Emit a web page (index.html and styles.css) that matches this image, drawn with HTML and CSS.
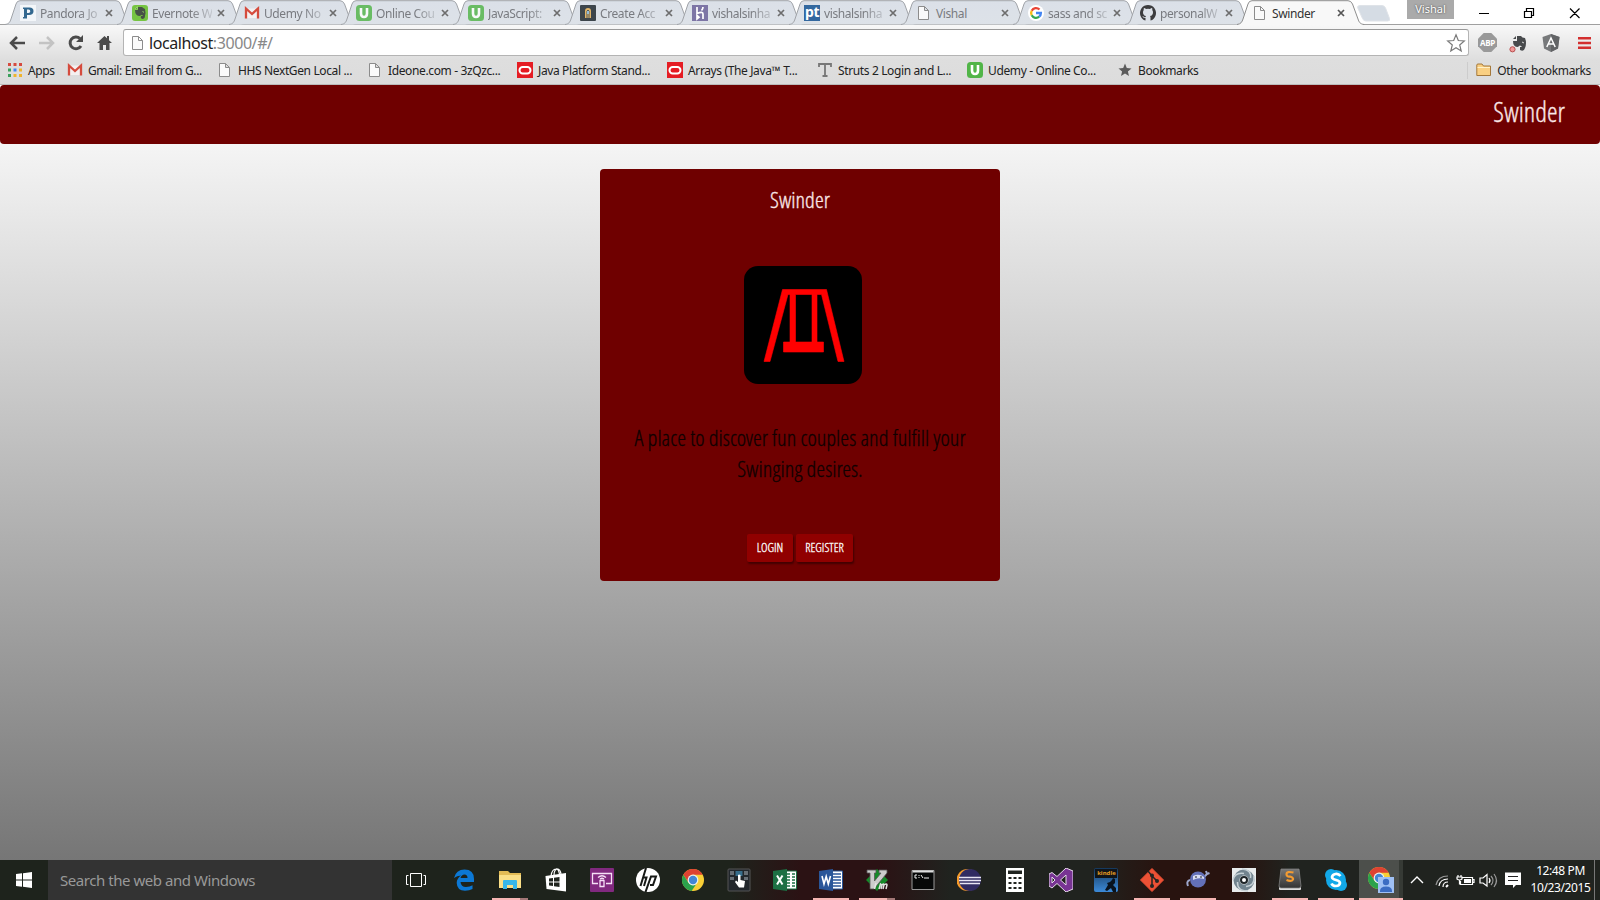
FILE: index.html
```html
<!DOCTYPE html>
<html lang="en">
<head>
<meta charset="utf-8">
<title>Swinder</title>
<link rel="stylesheet" href="styles.css">
</head>
<body>
<svg class="defs" aria-hidden="true">
  <defs>
    <linearGradient id="tabfill" x1="0" y1="0" x2="0" y2="1"><stop offset="0" stop-color="#dbe0e8"/><stop offset="1" stop-color="#dde2e8"/></linearGradient>
    <linearGradient id="blue" x1="0" y1="0" x2="0" y2="1"><stop offset="0" stop-color="#15385c"/><stop offset="1" stop-color="#3c8ad8"/></linearGradient>
    <linearGradient id="key" x1="0" y1="0" x2="0" y2="1"><stop offset="0" stop-color="#777"/><stop offset="1" stop-color="#333"/></linearGradient>
    <symbol id="tab" viewBox="0 0 128 25"><path d="M0 24.5C4 24 5 22 6 19L11 4Q12 .7 15 .7H111Q114 .7 115.500 4L121 19C122 22 123 24 127 24.500" fill="url(#tabfill)" stroke="#a0a3a8"/></symbol>
    <symbol id="tab-on" viewBox="0 0 128 25"><path d="M0 24.5C4 24 5 22 6 19L11 4Q12 .7 15 .7H111Q114 .7 115.500 4L121 19C122 22 123 24 127 24.500V26H0Z" fill="#f8f8f8" stroke="#8d8d8d"/></symbol>
    <symbol id="x" viewBox="0 0 8 8"><path d="M1 1L7 7M7 1L1 7" stroke="currentColor" stroke-width="1.700"/></symbol>
    <symbol id="page" viewBox="0 0 16 16"><path d="M2.500 1.500H8.500L12.500 5.500V14.500H2.500ZM8.500 1.500V5.500H12.500" fill="#fafafa" stroke="#8c8c8c"/></symbol>
    <symbol id="gmail" viewBox="0 0 16 16"><path d="M1 3.500H14V13H1Z" fill="#f4f0f0"/><path d="M2 13.500V3.500L8 9L14 3.500V13.500" fill="none" stroke="#d54b3d" stroke-width="2.300"/></symbol>
    <symbol id="udemy" viewBox="0 0 16 16"><rect width="16" height="16" rx="3.500" fill="#51b548"/><path d="M5 3V8.500Q5 12 8 12T11 8.500V3" fill="none" stroke="#fff" stroke-width="2.600"/></symbol>
    <symbol id="oracle" viewBox="0 0 16 16"><path d="M0 0H16V16H0Z" fill="#e51c23"/><rect x="2.500" y="5" width="11" height="6.500" rx="3.200" fill="none" stroke="#fff" stroke-width="2"/></symbol>
    <symbol id="chrome" viewBox="0 0 24 24"><circle cx="12" cy="12" r="11" fill="#f9cf36"/><path d="M2.300 6.700A11 11 0 0 1 21.700 6.700H12L7.500 14.600Z" fill="#dd4232"/><path d="M2.300 6.700L7.500 14.700 12 17.300 15 16.500 10.600 23A11 11 0 0 1 2.300 6.700" fill="#2ba24c"/><circle cx="12" cy="12" r="5.400" fill="#eef3ee"/><circle cx="12" cy="12" r="4.200" fill="#4386d5"/></symbol>
  </defs>
</svg>
<div class="browser">
  <div class="tabs">
    <div class="tab"><svg class="shape"><use href="#tab"/></svg><svg class="fav" viewBox="0 0 16 16"><path d="M0 0H16V16H0Z" fill="#f3f6f9"/><path d="M3 2.500H9.500Q13.500 2.500 13.500 6.200T9 10H7V13.500H3V12H4V4H3ZM7 4.500V8H8.500Q10.300 8 10.300 6.200T8.500 4.500Z" fill="#33688f" fill-rule="evenodd"/></svg><span class="name">Pandora Jo</span><svg class="close"><use href="#x"/></svg></div>
    <div class="tab"><svg class="shape"><use href="#tab"/></svg><svg class="fav" viewBox="0 0 16 16"><rect width="16" height="16" rx="3" fill="#76c442"/><path d="M6 2H10Q11 3 13 4Q14 8 13 11Q13 14 10 14Q8 13 9 11H11Q10 9 8 11Q3 11 3 5H6Z" fill="#475247"/><path d="M3 4L5.500 1.500V4ZM10.500 6.500L12 7.300" fill="#475247" stroke="#93d267"/></svg><span class="name">Evernote W</span><svg class="close"><use href="#x"/></svg></div>
    <div class="tab"><svg class="shape"><use href="#tab"/></svg><svg class="fav"><use href="#gmail"/></svg><span class="name">Udemy No</span><svg class="close"><use href="#x"/></svg></div>
    <div class="tab"><svg class="shape"><use href="#tab"/></svg><svg class="fav pale"><use href="#udemy"/></svg><span class="name">Online Cou</span><svg class="close"><use href="#x"/></svg></div>
    <div class="tab"><svg class="shape"><use href="#tab"/></svg><svg class="fav pale"><use href="#udemy"/></svg><span class="name">JavaScript:</span><svg class="close"><use href="#x"/></svg></div>
    <div class="tab"><svg class="shape"><use href="#tab"/></svg><svg class="fav" viewBox="0 0 16 16"><rect width="16" height="16" rx="1" fill="#3d454b"/><path d="M5 13V6Q5 3 8 3T11 6V13Z" fill="#e2b568"/><path d="M7 13V6Q8 4 9 6V13" fill="none" stroke="#4f5a60"/><path d="M8 6V9" stroke="#93bedc" stroke-width="2"/></svg><span class="name">Create Acc</span><svg class="close"><use href="#x"/></svg></div>
    <div class="tab"><svg class="shape"><use href="#tab"/></svg><svg class="fav" viewBox="0 0 16 16"><path d="M0 0H16V16H0Z" fill="#7d75a5"/><path d="M5 2V8.500Q11 6 11 9V14M11 2Q11 4 9.500 5.500M5 10.500V14L7 12.300Z" fill="none" stroke="#fff" stroke-width="1.700"/></svg><span class="name">vishalsinha</span><svg class="close"><use href="#x"/></svg></div>
    <div class="tab"><svg class="shape"><use href="#tab"/></svg><b class="fav pt">pt</b><span class="name">vishalsinha</span><svg class="close"><use href="#x"/></svg></div>
    <div class="tab"><svg class="shape"><use href="#tab"/></svg><svg class="fav"><use href="#page"/></svg><span class="name full">Vishal</span><svg class="close"><use href="#x"/></svg></div>
    <div class="tab"><svg class="shape"><use href="#tab"/></svg><svg class="fav" viewBox="0 0 16 16"><circle cx="8" cy="8" r="8" fill="#fff"/><g fill="none" stroke-width="2.300"><path d="M3.700 5.700A4.900 4.900 0 0 1 11.500 4.500" stroke="#e94435"/><path d="M3.700 10.300A4.900 4.900 0 0 1 3.700 5.700" stroke="#f9bb16"/><path d="M11.200 11.700A4.900 4.900 0 0 1 3.700 10.300" stroke="#36a853"/><path d="M8 8H12.900Q12.900 10.300 11.200 11.700" stroke="#4385f2"/></g></svg><span class="name">sass and sc</span><svg class="close"><use href="#x"/></svg></div>
    <div class="tab"><svg class="shape"><use href="#tab"/></svg><svg class="fav" viewBox="0 0 16 16"><path d="M5.500 15.600V13Q3.500 13.500 2.800 11.500L2 11Q3 10.700 4 12Q4.700 12.500 5.600 12.100Q5.700 11.400 6 11Q3 10.500 3 7.200Q3 5.800 3.800 5Q3.500 4 4 3Q5 3 6 3.900Q8 3.400 10 3.900Q11 3 12 3Q12.500 4 12.200 5Q13 5.800 13 7.200Q13 10.500 10 11Q10.500 11.500 10.500 12.500V15.600A8 8 0 1 0 5.500 15.600" fill="#3c3c3e"/></svg><span class="name">personalW</span><svg class="close"><use href="#x"/></svg></div>
    <div class="tab on"><svg class="shape"><use href="#tab-on"/></svg><svg class="fav"><use href="#page"/></svg><span class="name full">Swinder</span><svg class="close"><use href="#x"/></svg></div>
    <svg class="newtab" viewBox="0 0 34 17"><path d="M3 .5H25Q27.500 .5 28.500 3L32.500 13.500Q33.500 16 30.500 16H9Q6.500 16 5.500 13.500L.8 3Q0 .5 3 .5Z" fill="#d5dce4" stroke="#dfe3e8"/></svg>
    <div class="user">Vishal</div>
    <svg class="winctl" viewBox="0 0 120 26" fill="none" stroke="#000"><path d="M9 13.500H19M54.500 11.500H61.500V17.500H54.500ZM56.500 11V8.500H63.500V15.500H62M100 8.500L109.500 18M109.500 8.500L100 18" stroke-width="1.200"/></svg>
  </div>
  <div class="toolbar">
    <svg class="nav" viewBox="0 0 112 26"><g fill="none" stroke-width="2.500"><path d="M25 13H12M17 7L11 13L17 19" stroke="#4b4b4b"/><path d="M39 13H52M47 7L53 13L47 19" stroke="#c3c3c3"/><path d="M80 8.500A5.900 5.900 0 1 0 81 16" stroke="#4b4b4b" stroke-width="3"/></g><path d="M83 5V12H76ZM97 13L104.500 6L107 8.300V6H109V10.200L112 13H109.500V20H106V15H103V20H99.500V13Z" fill="#4b4b4b"/></svg>
    <div class="omnibox"><svg class="fav"><use href="#page"/></svg><span class="url">localhost<i>:3000/#/</i></span><svg class="star" viewBox="0 0 20 20"><path d="M10 1.800L12.300 7.500L18.300 8L13.700 12L15.200 18L10 14.700L4.800 18L6.300 12L1.700 8L7.700 7.500Z" fill="#fff" stroke="#7a7a7a" stroke-width="1.200"/></svg></div>
    <div class="exts">
      <b class="abp">ABP</b>
      <svg class="ext" viewBox="0 0 20 20"><path d="M8 3H12Q13 5 16 5Q18 10 16 15Q15 19 11 17V14H13Q11 11 9 14Q4 14 4 8H8Z" fill="#484a4c"/><path d="M4 6L7 3V6Z" fill="#484a4c"/><path d="M13 9L15 10" stroke="#ddd"/><circle cx="3.500" cy="16.300" r="2.600" fill="#f19898" stroke="#b75050"/></svg>
      <svg class="ext" viewBox="0 0 20 20"><path d="M10 1L18.500 4L17 15.500L10 19L3 15.500L1.500 4Z" fill="#77797b"/><path d="M10 1L18.500 4L17 15.500L10 19Z" fill="#626466"/><path d="M5.800 14L10 5L14.200 14M7.500 11H12.500" fill="none" stroke="#fff" stroke-width="1.500"/></svg>
      <svg class="menu" viewBox="0 0 14 14"><path d="M0 2H14M0 7H14M0 12H14" stroke="#d32f2f" stroke-width="2.700"/></svg>
    </div>
  </div>
  <div class="bookmarks">
    <div class="bm apps"><svg viewBox="0 0 16 16"><path d="M1 1h3v3h-3zM6.500 1h3v3h-3zM12 1h3v3h-3z" fill="#d64a3f"/><path d="M1 6.500h3v3h-3zM1 12h3v3h-3z" fill="#3ba05c"/><path d="M6.500 6.500h3v3h-3z" fill="#4385f2"/><path d="M12 6.500h3v3h-3zM6.500 12h3v3h-3zM12 12h3v3h-3z" fill="#efb42e"/></svg><span>Apps</span></div>
    <div class="bm"><svg><use href="#gmail"/></svg><span>Gmail: Email from G...</span></div>
    <div class="bm"><svg><use href="#page"/></svg><span>HHS NextGen Local ...</span></div>
    <div class="bm"><svg><use href="#page"/></svg><span>Ideone.com - 3zQzc...</span></div>
    <div class="bm"><svg><use href="#oracle"/></svg><span>Java Platform Stand...</span></div>
    <div class="bm"><svg><use href="#oracle"/></svg><span>Arrays (The Java™ T...</span></div>
    <div class="bm"><svg viewBox="0 0 16 16"><path d="M2 5V2H14V5M8 2V14M5.500 14H10.500" fill="none" stroke="#777" stroke-width="1.800"/></svg><span>Struts 2 Login and L...</span></div>
    <div class="bm"><svg><use href="#udemy"/></svg><span>Udemy - Online Co...</span></div>
    <div class="bm"><svg viewBox="0 0 16 16"><path d="M8 1.500L9.800 6L14.500 6.400L10.900 9.400L12 14L8 11.500L4 14L5.100 9.400L1.500 6.400L6.200 6Z" fill="#5b5b5b"/></svg><span>Bookmarks</span></div>
    <div class="bm other"><svg viewBox="0 0 16 16"><path d="M.8 3Q.8 2 2 2H6L7.500 4H14.500V13.500H.8Z" fill="#f9cf82" stroke="#a4783b"/><path d="M1.500 5.500H14" stroke="#fff1c8"/></svg><span>Other bookmarks</span></div>
  </div>
</div>
<main class="site">
  <header class="navbar"><span class="cond brand">Swinder</span></header>
  <section class="card">
    <h1 class="cond">Swinder</h1>
    <svg class="logo" viewBox="0 0 118 118"><rect width="118" height="118" rx="14" fill="#000"/><path d="M38.500 23.500H82.500L100 95.500H94L77.500 28.500H73V76H79.500V86H39.500V76H46V28.500H44L26 95.500H20ZM51.500 28.500V76H68V28.500Z" fill="#f00" stroke="#f00" stroke-width=".6" fill-rule="evenodd"/></svg>
    <p><span class="cond">A place to discover fun couples and fulfill your</span><span class="cond">Swinging desires.</span></p>
    <div class="actions"><button class="login"><span class="cond">LOGIN</span></button><button class="register"><span class="cond">REGISTER</span></button></div>
  </section>
</main>
<footer class="taskbar">
  <div class="start"><svg viewBox="0 0 16 16" fill="#fff"><path d="M0 2L6 1.300V7.500H0ZM7 1.200L16 0V7.500H7ZM0 8.500H6V14.700L0 14ZM7 8.500H16V16L7 14.800Z"/></svg></div>
  <div class="search">Search the web and Windows</div>
  <div class="view"><svg viewBox="0 0 22 16" fill="none" stroke="#fff"><path d="M5.500 1.500H16.500V14.500H5.500ZM3.500 3.500H1.500V12.500H3.500M18.500 3.500H20.500V12.500H18.500"/></svg></div>
  <div class="apps-row">
    <div class="app"><svg viewBox="0 0 24 24"><path d="M2 10Q4 1.500 12.500 1.500Q22 1.500 22 11V14H8.500Q9 19 14 19Q18 19 20.500 17.300V21Q17.500 22.700 13 22.700Q5 22.700 4.700 15Q4.700 10.500 9 7.500Q5 7.500 2 10ZM8.500 10H15.500Q15.500 6.500 12.500 6.500Q9.500 6.500 8.500 10Z" fill="#0c78d5" fill-rule="evenodd"/></svg></div>
    <div class="app run two"><svg viewBox="0 0 24 24"><path d="M1 3H10L12 5H23V20H1Z" fill="#e3bb55"/><path d="M1 7H23V20H1Z" fill="#fbdf87"/><path d="M5 21V13Q5 12 6 12H18Q19 12 19 13V21H15V17H9V21Z" fill="#38b7e9"/></svg></div>
    <div class="app"><svg viewBox="0 0 24 24"><path d="M1.500 8L22 5V23.500L2.500 21Z" fill="#fff"/><path d="M7 8Q8 1 12 1Q14 0 15.500 6M10 7Q10 1 14 1Q16.500 2 17 6" fill="none" stroke="#fff" stroke-width="1.200"/><path d="M5 10.500L9 10V13.500H5ZM10 9.800L15.500 9V13.500H10ZM5 14.500H9V18L5 17.500ZM10 14.500H15.500V19L10 18.200Z" fill="#20251f"/></svg></div>
    <div class="app"><svg viewBox="0 0 24 24"><rect width="24" height="24" rx="1" fill="#81297f"/><path d="M8 15.500H2.500V5.500H21.500V15.500H16M10 12.500H14V18.500H10ZM8 9.500Q12 6 16 9.500M10 11Q12 9.500 14 11" fill="none" stroke="#f6dff6" stroke-width="1.300"/></svg></div>
    <div class="app"><svg viewBox="0 0 24 24"><circle cx="12" cy="12" r="12" fill="#fff"/><path d="M10 0L4.500 18M7 9.500H10.500L8 18M18.500 8.500H15L9.500 24M14 17H17L20 8.500H17" fill="none" stroke="#171a17" stroke-width="2"/></svg></div>
    <div class="app"><svg><use href="#chrome"/></svg></div>
    <div class="app"><svg viewBox="0 0 24 24"><rect x="1" y="1" width="22" height="22" rx="1" fill="#22272c" stroke="#555"/><path d="M3 3h4v4h-4zM17 3h4v4h-4zM3 9h4v3h-4zM17 9h4v3h-4z" fill="#686f76"/><path d="M8.500 3h7v5h-7z" fill="#376d8b"/><path d="M11 7V14L9 12.500L8 14L12 19.500H17L18 13L13.500 12V7Q12 6 11 7Z" fill="#fff"/></svg></div>
    <div class="app"><svg viewBox="0 0 24 24"><path d="M12 3H23.500V21H12Z" fill="#fff" stroke="#1d7044"/><path d="M14 6h3M19 6h3M14 9h3M19 9h3M14 12h3M19 12h3M14 15h3M19 15h3M14 18h3M19 18h3" stroke="#1d7044" stroke-width="1.700"/><path d="M0 3L14 1V23L0 21Z" fill="#1d7044"/><path d="M4 7.500L9.500 16.500M9.500 7.500L4 16.500" stroke="#fff" stroke-width="2"/></svg></div>
    <div class="app run"><svg viewBox="0 0 24 24"><path d="M12 3H23.500V21H12Z" fill="#fff" stroke="#2a5699"/><path d="M14 6h8M14 9h8M14 12h8M14 15h8M14 18h8" stroke="#2a5699" stroke-width="1.300"/><path d="M0 3L14 1V23L0 21Z" fill="#2a5699"/><path d="M3 8L5 16L7.200 8.500L9.300 16L11.500 8" fill="none" stroke="#fff" stroke-width="1.600"/></svg></div>
    <div class="app run two"><svg viewBox="0 0 24 24"><path d="M12 1L23 12L12 23L1 12Z" fill="#148a28"/><path d="M2 2H11V5H9.500V13L16 5H14V2H22V5L9 21H5V5H2Z" fill="#ccc" stroke="#555" stroke-width=".8"/><path d="M11 15L9.500 21M14 21L15.500 16L17 17L16 21M17 17Q19 15 19 17L18 21M19 17Q22 15 22 17L21 21" fill="none" stroke="#e4e4e4" stroke-width="1.500"/></svg></div>
    <div class="app"><svg viewBox="0 0 24 24"><path d="M1 2.500H23V21.500H1Z" fill="#070808" stroke="#999"/><path d="M1.500 3.500H22.500" stroke="#ddd" stroke-width="2"/><path d="M6 7H4V10H6M8 7V8M8 9V10M10 7L12 10M13 10H18" fill="none" stroke="#eee"/></svg></div>
    <div class="app"><svg viewBox="0 0 24 24"><circle cx="10.500" cy="12" r="11" fill="#f59b2b"/><circle cx="13" cy="12" r="11" fill="#302b62"/><path d="M2 9.500H24M2 12.500H24M3 15.500H23" stroke="#e8e5f4" stroke-width="1.500"/></svg></div>
    <div class="app"><svg viewBox="0 0 24 24"><path d="M3 0H21V24H3Z" fill="#fff"/><path d="M5 2.500h14v3.500h-14zM5.500 9h3v2h-3zM10.500 9h3v2h-3zM15.500 9h3v2h-3zM5.500 14h3v2h-3zM10.500 14h3v2h-3zM15.500 14h3v2h-3zM5.500 19h3v2h-3zM10.500 19h3v2h-3zM15.500 19h3v2h-3z" fill="#20231f"/></svg></div>
    <div class="app"><svg viewBox="0 0 24 24"><path d="M17 0L24 3V21L17 24L8 15.500L3 20L0 18V6L3 4.500L8 8.500ZM17 7L11.500 12L17 17ZM3 9V15L6 12Z" fill="#783493" fill-rule="evenodd" stroke="#e7d9ec" stroke-width="1"/></svg></div>
    <div class="app kindle"><svg viewBox="0 0 24 24"><rect width="24" height="24" rx="2" fill="url(#blue)"/><path d="M1 1H23V10H1Z" fill="#101418"/><path d="M11 22L14 17L13 15L16 14L18 12L19 10L21 11V15L19 17L22 20V24H19L17 20L13 23Z" fill="#09131e"/></svg><b>kindle</b></div>
    <div class="app run"><svg viewBox="0 0 24 24"><path d="M12 .5L23.500 12L12 23.500L.5 12Z" fill="#ed5135" stroke="#ed5135" stroke-linejoin="round"/><path d="M8 3L12 8V18M12 8L17 13" fill="none" stroke="#252522" stroke-width="1.500"/><circle cx="12" cy="7.500" r="2" fill="#252522"/><circle cx="12" cy="18" r="2" fill="#252522"/><circle cx="17" cy="13" r="2" fill="#252522"/></svg></div>
    <div class="app run"><svg viewBox="0 0 24 24"><path d="M4 12Q0 13 2 18M18 9L21 6M21 6L20 3M21 6L23.500 5" fill="none" stroke="#9ea7cc" stroke-width="2"/><circle cx="12" cy="11.500" r="8" fill="#6370b8"/><path d="M7 8Q13 5 18 9V11Q12 9 7 12Z" fill="#d7dcf3"/><path d="M9 9h2M14 9h2" stroke="#222"/></svg></div>
    <div class="app"><svg viewBox="0 0 24 24"><path d="M0 0H24V24H0Z" fill="#e8ebec"/><circle cx="12" cy="12" r="7.500" fill="none" stroke="#71838e" stroke-width="6"/><path d="M1 12Q3 4 12 5.500M10 1Q20 2 18.500 10M22 8Q23 18 14 18.500M16 23Q5 23 5.500 14" fill="none" stroke="#c6d0d5" stroke-width="1.500"/><circle cx="12" cy="12" r="4" fill="#1d2427"/><circle cx="12" cy="12" r="2" fill="#fff"/></svg></div>
    <div class="app run"><svg viewBox="0 0 24 24"><path d="M1 18H23V21Q23 22 22 22H2Q1 22 1 21Z" fill="#ddd"/><path d="M3 1H21L23 18Q23 20 21 20H3Q1 20 1 18Z" fill="url(#key)" stroke="#888" stroke-width=".7"/><path d="M15.500 4.500Q8.500 3 8.500 6T12 8.500Q15.500 9.500 15 11.500Q13.500 14 8.500 12" fill="none" stroke="#f49b30" stroke-width="2.200"/></svg></div>
    <div class="app run"><svg viewBox="0 0 24 24"><circle cx="12" cy="12" r="10" fill="#12a8e8"/><circle cx="7" cy="7" r="6" fill="#12a8e8"/><circle cx="17" cy="17" r="6" fill="#12a8e8"/><path d="M16.500 8Q14.500 5.500 11.500 6T8 9Q8 11 12 12T16 15Q15.500 18 12 18T7.500 15.500" fill="none" stroke="#fff" stroke-width="2.700"/></svg></div>
    <div class="app run active"><svg viewBox="0 0 28 28"><use href="#chrome" width="24" height="24"/><path d="M11 11H27V27H11Z" fill="#9fc0f4"/><circle cx="19" cy="16" r="3.200" fill="#3b6cc3"/><path d="M13 25Q13 20.500 19 20.500T25 25V26H13Z" fill="#3b6cc3"/></svg></div>
  </div>
  <div class="tray">
    <svg viewBox="0 0 130 24" fill="none" stroke="#fff"><path d="M9 15L15 9L21 15" stroke-width="1.400"/><g stroke-width="1.200"><path d="M34 17Q36 8 46 8" stroke="#999"/><path d="M37 18Q38 11 46 11M41 19Q41 14 46 14"/><path d="M44 19L46 17" stroke-width="2"/><path d="M60.500 9.500H70.500V16.500H58.500V13M71 11.500H72V14.500H71M56 7V9M59 7V9M55 9H60V11Q57.500 13 55 11ZM57.500 12V16.500"/><path d="M62 11H69V15H62Z" fill="#fff" stroke="none"/><path d="M78 10H81L85 6.500V18L81 15H78Z"/><path d="M87 10Q89 12.500 87 15"/><path d="M89 8Q93 12.500 89 17M92 6Q97 12.500 92 19" stroke="#999"/></g><path d="M103 4.500H119V17H114L111 20V17H103Z" fill="#fff" stroke="none"/><path d="M106 8.500H116M106 12.500H116" stroke="#222"/></svg>
  </div>
  <div class="clock"><span>12:48 PM</span><span>10/23/2015</span></div>
</footer>
</body>
</html>
```
FILE: styles.css
```css
* { box-sizing: border-box; }
body { margin: 0; width: 1600px; height: 900px; overflow: hidden; display: flex; flex-direction: column; font: 12px "Noto Sans", "Open Sans", sans-serif; color: #333; }
.defs { position: absolute; width: 0; height: 0; }
svg { display: block; flex: none; }
.browser { height: 85px; flex: none; background: linear-gradient(#fff 24px, #f8f8f8 25px, #dedede 60px, #dcdcdc); border-bottom: 1px solid #bbb; }

.tabs { display: flex; height: 25px; padding-left: 5px; border-bottom: 1px solid #a0a0a0; }
.tab { position: relative; width: 128px; height: 25px; margin-right: -16px; flex: none; display: flex; align-items: center; padding: 1px 0 0 15px; color: #797b80; }
.shape { position: absolute; left: 0; top: 0; width: 128px; height: 25px; }
.fav { position: relative; width: 16px; height: 16px; flex: none; }
.pale { opacity: .82; }
.pt { background: #33689f; color: #fff; font: bold 14px/14px "Noto Sans", sans-serif; text-align: center; letter-spacing: -.5px; }
.name { position: relative; width: 60px; margin-left: 4px; white-space: nowrap; letter-spacing: -.4px; -webkit-mask-image: linear-gradient(90deg, #000 65%, rgba(0, 0, 0, .25)); mask-image: linear-gradient(90deg, #000 65%, rgba(0, 0, 0, .25)); }
.full { -webkit-mask-image: none; mask-image: none; }
.close { position: relative; width: 8px; height: 8px; margin-left: 5px; color: #6d6d6d; }
.on { z-index: 2; color: #333; }
.on .close { color: #555; }
.newtab { width: 34px; height: 17px; margin: 5px 17px 0 8px; }
.user { width: 47px; height: 19px; background: #aaa; color: #fff; text-align: center; line-height: 18px; font-size: 11px; text-shadow: 0 0 2px #333; margin: 0 16px 0 -1px; flex: none; }
.winctl { width: 120px; height: 26px; }

.toolbar { display: flex; align-items: center; height: 35px; }
.nav { width: 112px; height: 26px; margin: 0 11px 0 0; }
.omnibox { width: 1346px; height: 27px; display: flex; align-items: center; background: #fff; border: 1px solid #b4b4b4; border-top-color: #999; border-radius: 3px; padding: 0 2px 0 6px; }
.url { margin-left: 3px; font-size: 16px; letter-spacing: -.42px; line-height: 22px; color: #222; flex: 1; }
.url i { font-style: normal; color: #888; }
.star { width: 20px; height: 20px; }
.exts { display: flex; align-items: center; }
.abp { width: 19px; height: 19px; margin-left: 9px; background: #999; clip-path: polygon(30% 0, 70% 0, 100% 30%, 100% 70%, 70% 100%, 30% 100%, 0 70%, 0 30%); color: #fff; text-align: center; font: bold 8px/19px "Open Sans", sans-serif; letter-spacing: -.3px; }
.ext { width: 20px; height: 20px; margin-left: 12px; }
.menu { width: 13px; height: 14px; margin-left: 17px; }

.bookmarks { display: flex; align-items: center; height: 20px; padding: 0 9px 0 7px; color: #222; letter-spacing: -.37px; }
.bm { width: 150px; display: flex; align-items: center; gap: 5px; white-space: nowrap; flex: none; }
.bm svg { width: 16px; height: 16px; }
.apps { width: 60px; }
.other { width: auto; margin-left: auto; padding-left: 8px; border-left: 1px solid #ccc; }

.site { height: 775px; flex: none; background: linear-gradient(#fff, #767676); display: flex; flex-direction: column; align-items: center; }
.cond { font-family: "Open Sans Condensed Light", "Open Sans Condensed", "Open Sans Light", "Open Sans", sans-serif; font-weight: 300; white-space: nowrap; display: inline-block; -webkit-text-stroke: .3px currentColor; }
.navbar { width: 1600px; height: 59px; background: #6f0000; border-radius: 4px; display: flex; justify-content: flex-end; padding: 8px 35px 0 0; }
.brand { font-size: 27px; line-height: 38px; color: #fbe8e8; }
.card { width: 400px; height: 412px; margin-top: 25px; background: #6f0000; border-radius: 4px; display: flex; flex-direction: column; align-items: center; }
.card h1 { margin: 15px 0 0; font-size: 22.500px; line-height: 32px; color: #fbe8e8; }
.logo { width: 118px; height: 118px; margin: 50px 0 0 6px; }
.card p { margin: 38px 0 0; font-size: 22.500px; line-height: 31px; color: #100000; display: flex; flex-direction: column; align-items: center; }
.actions { display: flex; gap: 3px; margin-top: 50px; }
.actions button { height: 28px; padding: 0 0 2px; border: 0; border-radius: 2px; background: #900000; color: #fff; font-size: 12.500px; box-shadow: 1px 2px 2px #420000; }
.login { width: 46px; }
.register { width: 57px; }

.taskbar { height: 40px; flex: none; display: flex; color: #fff; background: linear-gradient(90deg, #1e231c 0 730px, #2b1214 800px 880px, #20231f 950px 1090px, #28130f 1160px 1240px, #20231f 1290px); }
.start { width: 48px; padding: 12px 16px; }
.start svg { width: 16px; height: 16px; }
.search { width: 344px; background: #333; color: #999; font-size: 15px; letter-spacing: -.45px; line-height: 40px; padding-left: 12px; }
.view { width: 49px; padding: 12px 0 0 13px; }
.view svg { width: 22px; height: 16px; }
.apps-row { display: flex; width: 962px; }
.app { position: relative; width: 45.900px; height: 40px; display: flex; align-items: center; justify-content: center; flex: none; }
.app svg { width: 24px; height: 24px; }
.run::after { content: ""; position: absolute; left: 5px; bottom: 0; width: 36px; height: 2px; background: #f5b4b2; }
.two::after { background: linear-gradient(90deg, #f5b4b2 28px, #a37776 28px); }
.active { width: 44px; background: linear-gradient(90deg, #4c4f4b 40px, #363a35 40px); }
.active::after { left: 0; width: 44px; }
.active svg { width: 28px; height: 28px; }
.kindle b { position: absolute; top: 9px; left: 11px; width: 24px; text-align: center; font: bold 6px/9px "Open Sans", sans-serif; color: #e79c22; }
.tray svg { width: 130px; height: 24px; margin: 8px 0 0 -1px; }
.clock { width: 64px; display: flex; flex-direction: column; align-items: center; padding: 2px 4px 0 0; line-height: 17px; border-right: 1px solid #777; margin-left: -1px; white-space: nowrap; letter-spacing: -.4px; }
```
